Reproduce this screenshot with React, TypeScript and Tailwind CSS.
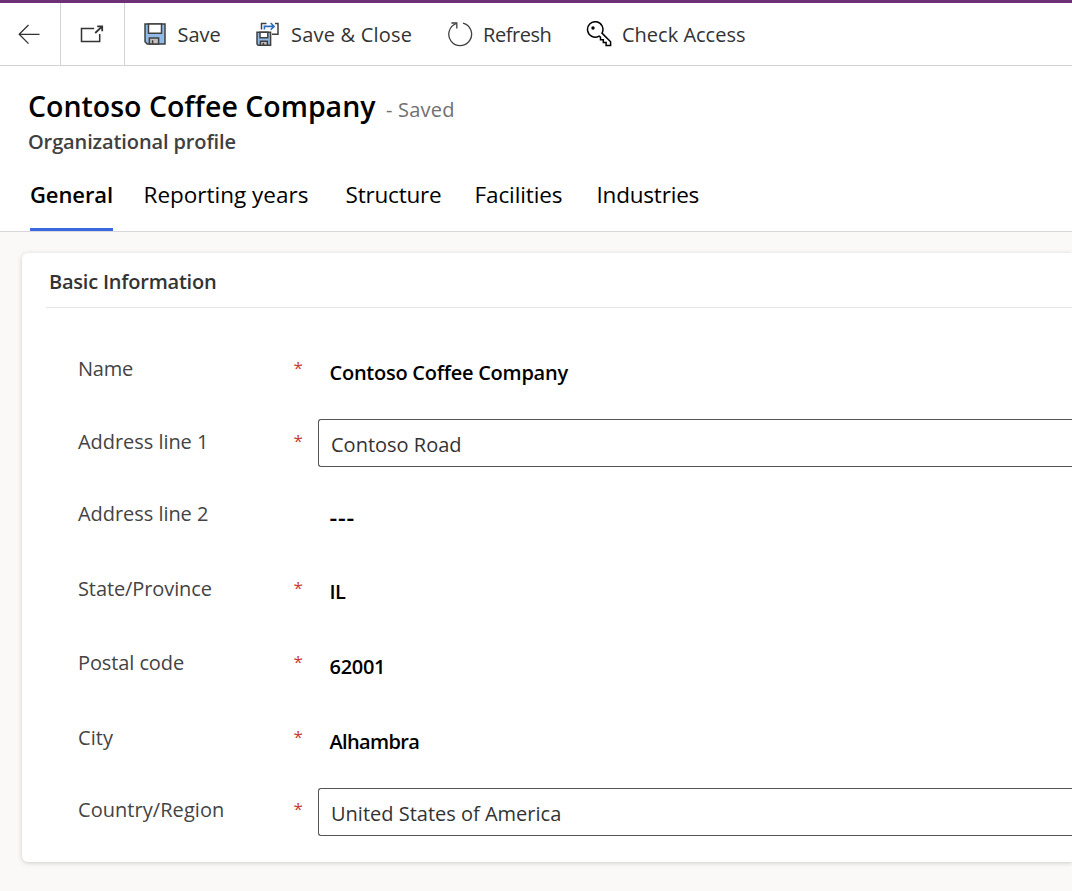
import type { ReactNode } from "react";

function BackIcon() {
  return (
    <svg width="24" height="24" viewBox="0 0 24 24" fill="none" stroke="#333" strokeWidth="1.3">
      <path d="M22.5 12.3H2M11.5 3 2.2 12.3l9.3 9.3" />
    </svg>
  );
}

function PopOutIcon() {
  return (
    <svg width="24" height="24" viewBox="0 0 24 24" fill="none" stroke="#333" strokeWidth="1.5">
      <path d="M14.2 6.5H1.5v13h18.2V12" />
      <path d="m15.2 11 6.4-6.2M17.2 4.3h5v5" strokeWidth="1.8" />
    </svg>
  );
}

function SaveIcon() {
  return (
    <svg width="22" height="22" viewBox="0 0 22 22" stroke="#404040" strokeWidth="1.5">
      <path d="M1 1h20v20H3.2L1 18.8z" fill="#90bae8" />
      <path d="M4.5 1h13v9.3h-13z" fill="#fff" />
      <path d="M5.4 21v-6h9.2v6z" fill="#c3c1be" />
      <path d="M8.6 17.2V21" fill="none" />
    </svg>
  );
}

function SaveCloseIcon() {
  return (
    <svg width="24" height="24" viewBox="0 0 24 24" fill="none" stroke="#404040" strokeWidth="1.5">
      <path d="M5.5 7.5v-6h5M19 1.5h3v10.8h-6" />
      <path d="M8.4 7.5V4.4h9.4M14.7 1l3.4 3.4-3.4 3.4" stroke="#2f6dbf" strokeWidth="1.6" />
      <path d="M1 10.3h13.6v13H2.2L1 22z" fill="#90bae8" />
      <path d="M4 10.3h7.8v5.5H4z" fill="#fff" />
      <path d="M4.4 23.3v-4.1h7v4.1z" fill="#c3c1be" />
      <path d="M7.4 20.8v2.5" />
    </svg>
  );
}

function RefreshIcon() {
  return (
    <svg width="26" height="26" viewBox="0 0 26 26" fill="none" stroke="#404040" strokeWidth="1.3">
      <path d="M16 2.2A11.4 11.4 0 1 1 9.4 2.5" />
      <path d="M4.4 2h5.4v5.6" />
    </svg>
  );
}

function KeyIcon() {
  return (
    <svg width="26" height="26" viewBox="0 0 26 26" fill="none" stroke="#000" strokeWidth="1.5">
      <path d="M16 12.1 24.6 20.8v3.8h-4.5v-3h-2.8v-2.9h-2.8v-2.5l-1.4-1.1A7.7 7.7 0 1 1 16 12.1z" />
      <circle cx="7" cy="7" r="1.7" fill="#000" stroke="none" />
    </svg>
  );
}

function Command({ icon, label, className }: { icon: ReactNode; label: string; className: string }) {
  return (
    <button className={`flex items-center whitespace-nowrap text-[20px] leading-[30px] text-[#333] ${className}`}>
      {icon}
      <span className="pt-[2px]">{label}</span>
    </button>
  );
}

const tabs = [
  { label: "Reporting years", className: "ml-[30.5px] w-[202px]" },
  { label: "Structure", className: "w-[129px] tracking-[-0.2px]" },
  { label: "Facilities", className: "w-[122px] tracking-[-0.1px]" },
  { label: "Industries", className: "w-[120px] tracking-[-0.2px]" },
];

type Field = {
  label: string;
  value: string;
  required?: boolean;
  input?: boolean;
  row: string;
  pad: string;
  labelClass: string;
  valueClass?: string;
};

const fields: Field[] = [
  { label: "Name", value: "Contoso Coffee Company", required: true, row: "h-[71px]", pad: "pt-[6px]", labelClass: "tracking-[-0.2px]", valueClass: "pt-[2px] text-[20px] tracking-[-0.25px]" },
  { label: "Address line 1", value: "Contoso Road", required: true, input: true, row: "h-[74px]", pad: "pt-[8px]", labelClass: "tracking-[-0.05px]" },
  { label: "Address line 2", value: "---", row: "h-[74px]", pad: "pt-[6px]", labelClass: "tracking-[-0.05px]", valueClass: "text-[24px] tracking-[0.8px]" },
  { label: "State/Province", value: "IL", required: true, row: "h-[75px]", pad: "pt-[7px]", labelClass: "tracking-[-0.1px]", valueClass: "pt-[2px] text-[20px] tracking-[-0.5px]" },
  { label: "Postal code", value: "62001", required: true, row: "h-[75px]", pad: "pt-[6px]", labelClass: "tracking-[-0.1px]", valueClass: "pt-[2px] text-[20px] tracking-[-0.3px]" },
  { label: "City", value: "Alhambra", required: true, row: "h-[71px]", pad: "pt-[6px]", labelClass: "tracking-[0.1px]", valueClass: "pt-[2px] text-[20px] tracking-[-0.65px]" },
  { label: "Country/Region", value: "United States of America", required: true, input: true, row: "h-[48px]", pad: "pt-[7px]", labelClass: "tracking-[0.05px]" },
];

function FieldRow({ field }: { field: Field }) {
  return (
    <div className={`flex items-start ${field.row}`}>
      <div className={`w-[215.5px] shrink-0 text-[20px] leading-[30px] text-[#444] ${field.pad} ${field.labelClass}`}>{field.label}</div>
      <div className={`w-[24.5px] shrink-0 text-[17px] leading-[28px] text-[#c83a2e] ${field.pad}`}>{field.required ? "*" : ""}</div>
      {field.input ? (
        <div className="flex h-[48px] flex-1 items-center rounded-l-[3px] border border-r-0 border-[#555] pt-[4px] pl-[12px] text-[20px] leading-[30px] text-[#333]">
          {field.value}
        </div>
      ) : (
        <div className={`flex h-[48px] flex-1 items-center pl-[11.5px] leading-[30px] font-semibold text-black ${field.valueClass ?? ""}`}>
          {field.value}
        </div>
      )}
    </div>
  );
}

export default function App() {
  return (
    <div className="flex h-[891px] w-full flex-col overflow-hidden bg-[#faf9f8] font-['Open_Sans','Noto_Sans',sans-serif]">
      <header className="flex h-[66px] shrink-0 border-t-[3px] border-b border-t-[#6c3074] border-b-[#d2d2d2] bg-white">
        <button className="flex w-[61px] items-center justify-center border-r border-[#d2d2d2] pr-[2px]">
          <BackIcon />
        </button>
        <button className="flex w-[64px] items-center justify-center border-r border-[#d2d2d2] pr-[2px]">
          <PopOutIcon />
        </button>
        <Command icon={<SaveIcon />} label="Save" className="ml-[19px] w-[112px] gap-[11.5px]" />
        <Command icon={<SaveCloseIcon />} label="Save & Close" className="w-[191px] gap-[11px] tracking-[0.2px]" />
        <Command icon={<RefreshIcon />} label="Refresh" className="w-[139px] gap-[10px] tracking-[-0.45px]" />
        <Command icon={<KeyIcon />} label="Check Access" className="gap-[10px]" />
      </header>

      <section className="h-[166px] shrink-0 border-b border-[#d8d8dc] bg-white">
        <div className="flex items-baseline pt-[21px] pl-[28px]">
          <h1 className="w-[358px] text-[28.5px] leading-[38px] font-semibold whitespace-nowrap text-black">Contoso Coffee Company</h1>
          <span className="text-[20px] leading-[30px] tracking-[0.2px] text-[#707070]">- Saved</span>
        </div>
        <p className="pt-[2px] pl-[28px] text-[20px] leading-[30px] font-semibold tracking-[-0.12px] text-[#404040]">Organizational profile</p>
        <nav className="mt-[18px] flex pl-[30px] text-[22.5px] leading-[34px] whitespace-nowrap text-black">
          <button className="flex h-[56px] w-[83px] items-start border-b-[3px] border-[#3b69e0] pt-[2px] text-[22px] font-semibold tracking-[-0.1px]">
            General
          </button>
          {tabs.map((tab) => (
            <button key={tab.label} className={`flex h-[56px] items-start pt-[3px] ${tab.className}`}>
              {tab.label}
            </button>
          ))}
        </nav>
      </section>

      <main className="mt-[21px] ml-[22px] h-[609px] rounded-l-[6px] bg-white pl-[24px] shadow-[0_1px_5px_rgba(0,0,0,0.18)]">
        <h2 className="h-[55px] border-b border-[#e6e6e6] pt-[14px] pl-[3px] text-[20px] leading-[30px] font-semibold tracking-[-0.22px] text-[#333]">
          Basic Information
        </h2>
        <div className="pt-[40px] pl-[32px]">
          {fields.map((field) => (
            <FieldRow key={field.label} field={field} />
          ))}
        </div>
      </main>
    </div>
  );
}
